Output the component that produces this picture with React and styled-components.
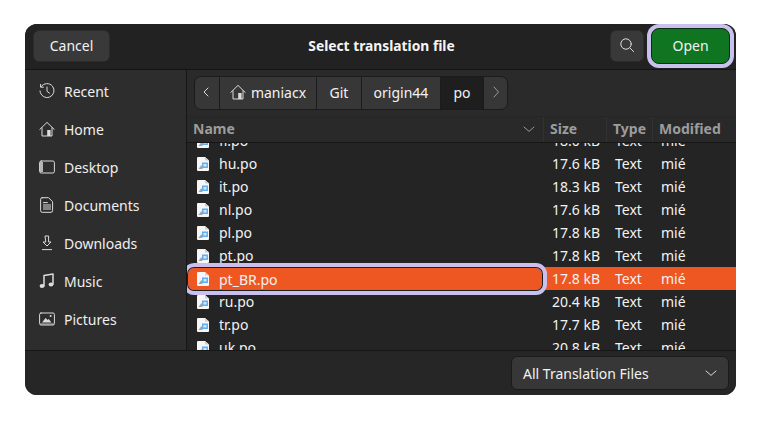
import React from 'react';
import styled, { createGlobalStyle } from 'styled-components';

const Global = createGlobalStyle`
  html, body {
    margin: 0;
    background: #fff;
  }
  body {
    font-family: "Noto Sans", "Open Sans", sans-serif;
    font-size: 14px;
    color: #f2f2f2;
  }
`;

const Window = styled.div`
  margin: 24px 0 0 25px;
  width: 711px;
  height: 371px;
  display: flex;
  flex-direction: column;
  background: #242424;
  border-radius: 12px;
  overflow: hidden;
`;

const Header = styled.header`
  flex: 0 0 46px;
  box-sizing: border-box;
  display: grid;
  grid-template-columns: 1fr auto 1fr;
  align-items: center;
  padding: 0 6px 1px 8px;
  background: #222;
  border-bottom: 1px solid #141414;
`;

const HeaderSide = styled.div`
  display: flex;
  align-items: center;
  justify-content: ${({ $end }) => ($end ? 'flex-end' : 'flex-start')};
  gap: 7px;
`;

const Title = styled.div`
  margin-bottom: 2px;
  font-weight: 700;
  font-size: 13.8px;
  color: #f5f5f5;
`;

const Button = styled.button`
  box-sizing: border-box;
  height: 32px;
  width: ${({ $width }) => $width}px;
  display: flex;
  align-items: center;
  justify-content: center;
  padding: 0 0 2px;
  border: 1px solid #2c2c2c;
  border-radius: 6px;
  background: #393939;
  color: #f2f2f2;
  font: inherit;
`;

const OpenButton = styled(Button)`
  height: 36px;
  border: 1px solid #0b2f10;
  border-radius: 8px;
  background: #0f7520;
  box-shadow: 0 0 0 4px #c9c0ee;
`;

const Content = styled.div`
  flex: 1;
  min-height: 0;
  display: flex;
`;

const Sidebar = styled.nav`
  flex: 0 0 162px;
  box-sizing: border-box;
  padding-top: 2px;
  background: #2d2d2d;
  border-right: 1px solid #161616;
`;

const Place = styled.div`
  height: 38px;
  display: flex;
  align-items: center;
  gap: 9px;
  padding-left: 14px;
  color: #efefef;
`;

const Main = styled.main`
  flex: 1;
  min-width: 0;
  display: flex;
  flex-direction: column;
`;

const PathRow = styled.div`
  flex: 0 0 47px;
  box-sizing: border-box;
  padding: 6px 0 0 7px;
  background: #2a2a2a;
  border-bottom: 1px solid #262626;
`;

const PathBar = styled.div`
  display: inline-flex;
  height: 34px;
  box-sizing: border-box;
  border: 1px solid #1b1b1b;
  border-radius: 7px;
  overflow: hidden;
  background: #373737;
`;

const Crumb = styled.div`
  width: ${({ $width }) => $width}px;
  box-sizing: border-box;
  display: flex;
  align-items: center;
  justify-content: center;
  gap: 5px;
  padding-bottom: 2px;
  background: ${({ $active }) => ($active ? '#1e1e1e' : 'transparent')};
  & + & {
    border-left: 1px solid #1b1b1b;
  }
`;

const ColumnHeader = styled.div`
  flex: 0 0 26px;
  box-sizing: border-box;
  display: grid;
  grid-template-columns: 356px 63px 46px 1fr;
  background: #292929;
  border-bottom: 1px solid #161616;
  color: #9c9c9c;
  font-weight: 700;
`;

const ColumnTitle = styled.div`
  display: flex;
  align-items: center;
  justify-content: space-between;
  padding: 0 6px 2px 6px;
  & + & {
    border-left: 1px solid #323232;
  }
`;

const List = styled.div`
  flex: 1;
  min-height: 0;
  overflow: hidden;
`;

const Rows = styled.div`
  margin-top: -14px;
`;

const Row = styled.div`
  height: 23px;
  display: grid;
  grid-template-columns: 356px 63px 46px 1fr;
  align-items: center;
  background: ${({ $selected }) => ($selected ? '#ee5622' : 'transparent')};
  color: #f2f2f2;
`;

const NameCell = styled.div`
  height: 23px;
  box-sizing: border-box;
  display: flex;
  align-items: center;
  gap: 10px;
  padding-left: 10px;
  ${({ $focused }) => $focused && `
    position: relative;
    z-index: 1;
    height: 22px;
    margin: 1px 1px 0;
    padding-left: 9px;
    border-radius: 6px;
    box-shadow: 0 0 0 1px #1f1f1f, 0 0 0 5px #c9c0ee;
  `}
`;

const Cell = styled.div`
  padding-left: ${({ $pad }) => $pad}px;
  white-space: nowrap;
`;

const Footer = styled.footer`
  flex: 0 0 45px;
  box-sizing: border-box;
  display: flex;
  justify-content: flex-end;
  align-items: center;
  padding-right: 7px;
  background: #262626;
  border-top: 1px solid #161616;
`;

const Combo = styled.div`
  box-sizing: border-box;
  width: 218px;
  height: 34px;
  display: flex;
  align-items: center;
  justify-content: space-between;
  padding: 0 9px 0 11px;
  border: 1px solid #1b1b1b;
  border-radius: 6px;
  background: #373737;
`;

const Icon = styled.svg`
  flex: none;
  display: block;
  fill: none;
  stroke: ${({ $dim }) => ($dim ? '#9a9a9a' : '#dcdcdc')};
  stroke-width: 1;
  stroke-linecap: round;
  stroke-linejoin: round;
`;

const Glyph = ({ dim, children }) => (
  <Icon $dim={dim} width={16} height={16} viewBox="0 0 16 16">{children}</Icon>
);

const RecentIcon = () => (
  <Glyph>
    <path d="M2.2 3.6A7 7 0 1 1 1 8" />
    <path d="M1.6 1.4v2.8h2.8M8 4v4.4l2.6 1.8" />
  </Glyph>
);

const HomeIcon = () => (
  <Glyph>
    <path d="M.8 8.4 8 1.4l7.2 7M3 6.8V15h10V6.8" />
    <rect x="8.2" y="9" width="3.4" height="6" fill="#dcdcdc" stroke="none" />
  </Glyph>
);

const DesktopIcon = () => (
  <Glyph>
    <rect x=".6" y="2" width="14.8" height="12" rx="1.6" />
    <path d="M1 3h3v10H1z" fill="#b5b5b5" stroke="none" />
  </Glyph>
);

const DocumentsIcon = () => (
  <Glyph>
    <path d="M3.2.7h6.4l4 4v9a1.6 1.6 0 0 1-1.6 1.6H3.2a1.6 1.6 0 0 1-1.6-1.6V2.3A1.6 1.6 0 0 1 3.2.7z" />
    <path d="M4.4 5.6h4M4.4 8h7.2M4.4 10h7.2M4.4 12h7.2" />
  </Glyph>
);

const DownloadsIcon = () => (
  <Glyph>
    <path d="M6.4 1h3.2v6h2.4L8 11 4 7h2.4zM3.4 14.6h9.2" />
  </Glyph>
);

const MusicIcon = () => (
  <Glyph>
    <path d="M5 13V2.6L14 1v10" strokeWidth="1.5" />
    <ellipse cx="3" cy="13" rx="2.4" ry="2" fill="#dcdcdc" stroke="none" />
    <ellipse cx="12" cy="11.4" rx="2.4" ry="2" fill="#dcdcdc" stroke="none" />
  </Glyph>
);

const PicturesIcon = () => (
  <Glyph>
    <rect x=".6" y="2" width="14.8" height="12" rx="1.4" />
    <path d="M1 12.6h14v1H1z" fill="#bdbdbd" stroke="none" />
    <path d="M3 11.6 6.6 7l2 2 1.2-1 2.6 3.6z" fill="#dcdcdc" stroke="none" />
    <circle cx="11.6" cy="5" r="1" fill="#dcdcdc" stroke="none" />
  </Glyph>
);

const SearchIcon = () => (
  <Glyph>
    <circle cx="7" cy="7" r="5.2" />
    <path d="m11 11 3.6 3.6" />
  </Glyph>
);

const Chevron = ({ dir, dim }) => {
  const paths = {
    left: 'M9 4 5 8l4 4',
    right: 'M6 3l4.5 5L6 13',
    down: 'M3 6l5 4.4L13 6',
  };
  return <Glyph dim={dim}><path d={paths[dir]} /></Glyph>;
};

const FileIcon = () => (
  <svg width="12" height="14" viewBox="0 0 12 14" style={{ flex: 'none', display: 'block' }}>
    <path d="M0 1a1 1 0 0 1 1-1h7l4 3.5V13a1 1 0 0 1-1 1H1a1 1 0 0 1-1-1z" fill="#f6f6f6" />
    <path d="M8 0v3.5h4z" fill="#cfcfcf" />
    <path d="M1.5 12 4 8.5h1.5V12z" fill="#a3a3a3" />
    <rect x="5" y="5.5" width="6" height="5.5" fill="#62aeee" />
    <rect x="6.5" y="7" width="3" height="2.5" fill="#cfe6fb" />
  </svg>
);

const places = [
  ['Recent', RecentIcon],
  ['Home', HomeIcon],
  ['Desktop', DesktopIcon],
  ['Documents', DocumentsIcon],
  ['Downloads', DownloadsIcon],
  ['Music', MusicIcon],
  ['Pictures', PicturesIcon],
];

const files = [
  ['fr.po', '18.0 kB'],
  ['hu.po', '17.6 kB'],
  ['it.po', '18.3 kB'],
  ['nl.po', '17.6 kB'],
  ['pl.po', '17.8 kB'],
  ['pt.po', '17.8 kB'],
  ['pt_BR.po', '17.8 kB'],
  ['ru.po', '20.4 kB'],
  ['tr.po', '17.7 kB'],
  ['uk.po', '20.8 kB'],
];

export default function App() {
  return (
    <>
      <Global />
      <Window>
        <Header>
          <HeaderSide>
            <Button $width={77}>Cancel</Button>
          </HeaderSide>
          <Title>Select translation file</Title>
          <HeaderSide $end>
            <Button $width={34}><SearchIcon /></Button>
            <OpenButton $width={79}>Open</OpenButton>
          </HeaderSide>
        </Header>
        <Content>
          <Sidebar>
            {places.map(([label, PlaceIcon]) => (
              <Place key={label}><PlaceIcon />{label}</Place>
            ))}
          </Sidebar>
          <Main>
            <PathRow>
              <PathBar>
                <Crumb $width={24}><Chevron dir="left" /></Crumb>
                <Crumb $width={97}><HomeIcon />maniacx</Crumb>
                <Crumb $width={45}>Git</Crumb>
                <Crumb $width={79}>origin44</Crumb>
                <Crumb $width={43} $active>po</Crumb>
                <Crumb $width={24}><Chevron dir="right" dim /></Crumb>
              </PathBar>
            </PathRow>
            <ColumnHeader>
              <ColumnTitle>Name<Chevron dir="down" dim /></ColumnTitle>
              <ColumnTitle>Size</ColumnTitle>
              <ColumnTitle>Type</ColumnTitle>
              <ColumnTitle>Modified</ColumnTitle>
            </ColumnHeader>
            <List>
              <Rows>
                {files.map(([name, size]) => {
                  const selected = name === 'pt_BR.po';
                  return (
                    <Row key={name} $selected={selected}>
                      <NameCell $focused={selected}><FileIcon />{name}</NameCell>
                      <Cell $pad={9}>{size}</Cell>
                      <Cell $pad={9}>Text</Cell>
                      <Cell $pad={9}>mié</Cell>
                    </Row>
                  );
                })}
              </Rows>
            </List>
          </Main>
        </Content>
        <Footer>
          <Combo>All Translation Files<Chevron dir="down" /></Combo>
        </Footer>
      </Window>
    </>
  );
}
